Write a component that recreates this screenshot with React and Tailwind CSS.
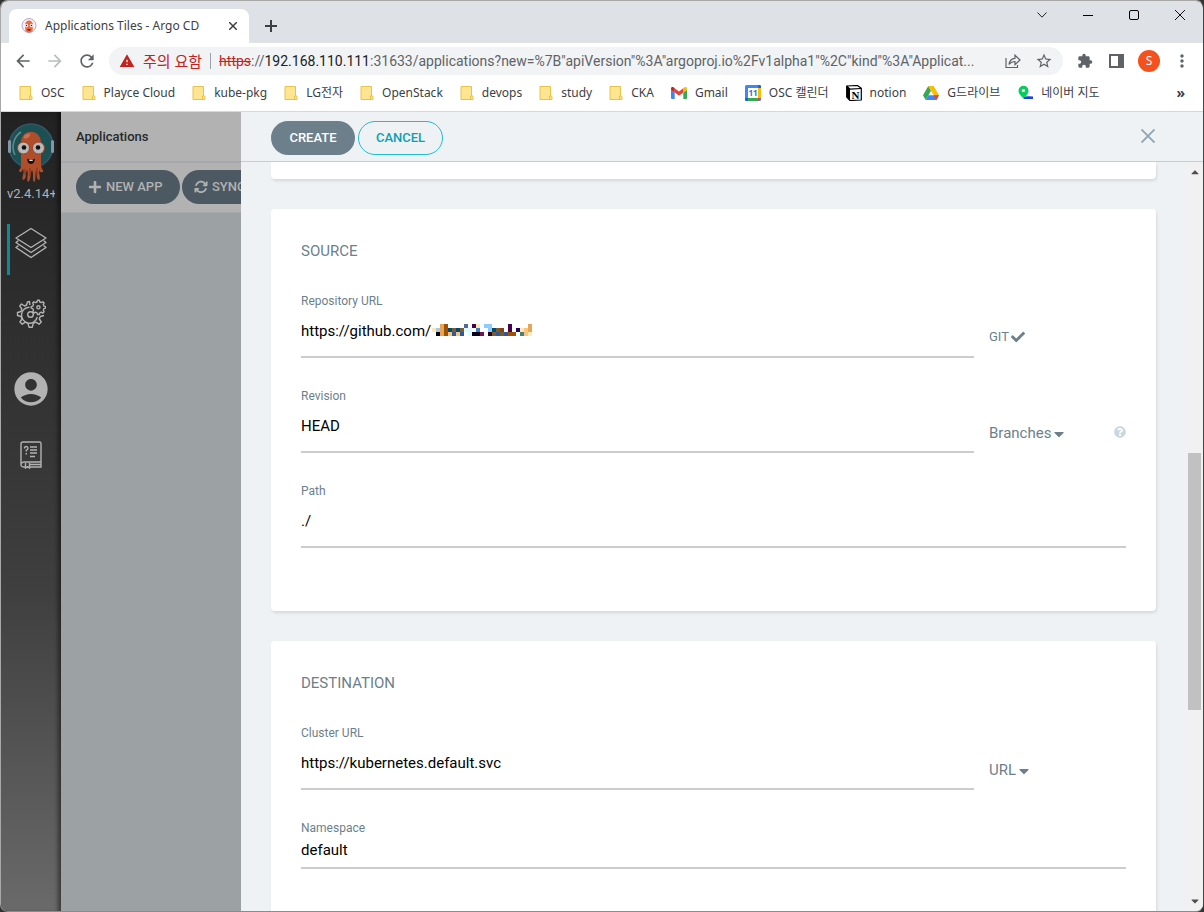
import { useState } from 'react';
import { FaCheck, FaCaretDown, FaCaretUp, FaPlus, FaQuestionCircle } from 'react-icons/fa';
import { FaArrowsRotate } from 'react-icons/fa6';
import {
  MdAccountCircle,
  MdArrowBack,
  MdArrowForward,
  MdExtension,
  MdMoreVert,
  MdRefresh,
  MdStarBorder,
  MdWarning,
} from 'react-icons/md';

const OctopusLogo = ({ className }) => (
  <svg viewBox="0 0 48 60" className={className} aria-hidden="true">
    <circle cx="24" cy="23" r="22" fill="#1d5052" stroke="#33566a" strokeWidth="1.5" />
    <path d="M8 32 A18 18 0 0 1 14 9" fill="none" stroke="#5f8a8c" strokeWidth="1.6" />
    <rect x="1" y="17" width="3" height="13" rx="1.5" fill="#8197a6" />
    <rect x="44" y="17" width="3" height="13" rx="1.5" fill="#8197a6" />
    <path
      d="M14 20 C14 5 34 5 34 20 L34 42 C35 48 37 47 36 49 C33 50 32 48 32 46 C32 53 34 56 32 57 C29 56 30 51 29 47 C28 53 29 59 27 59 C25 57 27 51 25 47 C23 51 24 58 21 59 C19 56 22 51 20 47 C18 51 20 56 16 57 C14 55 18 50 16 46 C15 49 13 50 12 48 C12 46 14 47 14 42 Z"
      fill="#b04e2c"
    />
    <path d="M18 46v6M23 45v8M30 45v7" stroke="#7d3520" strokeWidth="1" />
    <ellipse cx="20" cy="13" rx="3.5" ry="2" fill="#c9714f" transform="rotate(-30 20 13)" />
    <circle cx="16.500" cy="25" r="6" fill="#b9b9b9" stroke="#a03f2a" />
    <circle cx="31.500" cy="25" r="6" fill="#b9b9b9" stroke="#a03f2a" />
    <circle cx="17" cy="24.500" r="2.300" fill="#111" />
    <circle cx="31" cy="24.500" r="2.300" fill="#111" />
    <path d="M20 35.500 Q24 38 28 35.500 Q27.500 41 24 41 Q20.500 41 20 35.500Z" fill="#1b1010" />
    <path d="M22.300 36.700h3.400v1.300h-3.400z" fill="#ddd" />
  </svg>
);

const TabFavicon = () => (
  <svg viewBox="0 0 16 16" className="size-4" aria-hidden="true">
    <circle cx="8" cy="7.500" r="7" fill="#f4f0f6" stroke="#b5a8cf" />
    <path d="M4 7 C4 1 12 1 12 7 L11.500 13 Q8 16 4.500 13Z" fill="#ee6b3f" />
    <circle cx="5.500" cy="7.500" r="1.700" fill="#fff" />
    <circle cx="10.500" cy="7.500" r="1.700" fill="#fff" />
    <circle cx="5.500" cy="7.500" r=".8" fill="#222" />
    <circle cx="10.500" cy="7.500" r=".8" fill="#222" />
    <path d="M6.500 11h3v1.500h-3z" fill="#5a1f12" />
  </svg>
);

const LayersIcon = () => (
  <svg viewBox="0 0 34 32" className="h-8 w-[34px]" fill="none" stroke="#b2b2b2" strokeWidth="1.4" strokeLinejoin="round">
    <path d="M17 1.500 32 11 17 20.500 2 11Z" />
    <path d="M4.500 13.500 2 15.500 17 25.500 32 15.500 29.500 13.500" />
    <path d="M4.500 18.500 2 20.500 17 30.500 32 20.500 29.500 18.500" />
  </svg>
);

const GearsIcon = () => (
  <svg viewBox="0 0 30 30" className="size-[30px]" fill="none" stroke="#b2b2b2" strokeWidth="1.4" strokeLinejoin="round">
    <path d="M13.800 6 13.500 2.500 11.500 3 10.500 6 8.500 7 5.500 5 3.800 7 5.800 10 5 12.500 1.500 13.500 1.500 16.500 5 17.500 6 20 4 23 6.200 25.200 9.500 23.200 12 24.300 13 28.200 16.300 28.200 17.300 24.300 19.800 23.200 23 25.200 25.300 23 23.300 20 24.300 17.500 28 16.500" />
    <path d="M21.300 18 A8 8 0 1 1 13.500 8.200" />
    <circle cx="14.500" cy="15.500" r="2.800" />
    <path d="M21.500 1.200h1.800l.5 1.800 1.500.6 1.600-.8 1.200 1.200-.8 1.600.6 1.500 1.700.5v1.600l-1.700.5-.6 1.500.8 1.600-1.200 1.200-1.600-.8-1.500.6-.5 1.700h-1.800l-.5-1.700-1.500-.6-1.600.8-1.200-1.200.8-1.600-.6-1.500-1.700-.5V7.600l1.700-.5.6-1.500-.8-1.600 1.200-1.200 1.600.8 1.500-.6Z" />
    <circle cx="22.400" cy="8.300" r="1.600" />
  </svg>
);

const BookIcon = () => (
  <svg viewBox="0 0 22 28" className="h-7 w-[22px]" fill="none" stroke="#b2b2b2" strokeWidth="1.4">
    <path d="M5 26 H3.500 Q1 26 1 23.500 V3 Q1 1 3 1 H19.500 Q21 1 21 2.500 V26 H10" />
    <path d="M1.500 22.500 Q2 21 4 21 H21 M10 23.500 H21" />
    <path d="M5.500 22v5l2-1.300 2 1.300v-5" />
    <path d="M4.500 7.500 Q4.500 5.500 6.300 5.500 Q8 5.500 8 7.300 Q8 8.500 6.300 9.300 V10.500 M6.300 12v1.500" />
    <path d="M10 6h7M10 9h7M10 12h7M10 15.500h5" />
  </svg>
);

const FolderIcon = () => (
  <svg viewBox="0 0 14 16" className="h-4 w-3.5">
    <path d="M1 1.500h10.500v9l1.500 1v3H1Z" fill="#ffe591" stroke="#e8c34a" />
    <path d="M10.500 14.500v-3.500h2" fill="none" stroke="#e8c34a" />
  </svg>
);

const GmailIcon = () => (
  <svg viewBox="0 0 16 12" className="h-3 w-4">
    <path d="M1 12h2.700V5.500L0 2.700V11q0 1 1 1Z" fill="#4285f4" />
    <path d="M12.300 12H15q1 0 1-1V2.700l-3.700 2.800Z" fill="#34a853" />
    <path d="M12.300 1.300v4.200L16 2.700V1.500C16 0 14.500-.5 13.500.3Z" fill="#fbbc04" />
    <path d="M3.700 5.500V1.300L8 4.500l4.300-3.200v4.200L8 8.700Z" fill="#ea4335" />
    <path d="M0 1.500v1.200l3.700 2.800V1.300L2.500.3C1.500-.5 0 0 0 1.500Z" fill="#c5221f" />
  </svg>
);

const CalendarIcon = () => (
  <svg viewBox="0 0 16 16" className="size-4">
    <rect width="16" height="16" rx="1.500" fill="#4285f4" />
    <path d="M13 3H16v10h-3Z" fill="#fbbc04" />
    <path d="M3 13h10V16H3Z" fill="#34a853" />
    <path d="M13 13H16L13 16Z" fill="#ea4335" />
    <path d="M0 13h3V16H1.500Q0 16 0 14.500ZM13 0h1.500Q16 0 16 1.500V3h-3Z" fill="#1967d2" />
    <path d="M3 3h10v10H3Z" fill="#fff" />
    <text x="8" y="11" textAnchor="middle" fontSize="8" fontWeight="700" fill="#1a73e8">11</text>
  </svg>
);

const NotionIcon = () => (
  <svg viewBox="0 0 16 16" className="size-4">
    <path d="M.7 1 11.500.5 15.300 3.300V15L4 15.500.7 12Z" fill="#fff" stroke="#000" strokeWidth="1.2" strokeLinejoin="round" />
    <path d="M.7 1 4 4.200V15.500L.7 12Z" fill="#000" />
    <path d="M.7 1 4 4.200 15.300 3.500" fill="none" stroke="#000" strokeWidth="1.2" />
    <text x="9.500" y="13.500" textAnchor="middle" fontSize="11" fontWeight="700" fontFamily="Liberation Serif, serif" fill="#000">N</text>
  </svg>
);

const DriveIcon = () => (
  <svg viewBox="0 0 16 14" className="h-3.5 w-4">
    <path d="M5.300 0 L0 9.300 2.700 14 8 4.700Z" fill="#34a853" />
    <path d="M5.300 0 H10.700 L16 9.300 H10.700Z" fill="#fbbc04" />
    <path d="M5.300 9.300 H16 L13.300 14 H2.700Z" fill="#4285f4" />
    <path d="M10.700 9.300H16L13.300 14Z" fill="#ea4335" />
  </svg>
);

const MapIcon = () => (
  <svg viewBox="0 0 16 16" className="size-4">
    <path d="M6.500 12 Q8 11 16 11.500V14H7Z" fill="#1b3fe0" />
    <path d="M6.500 14C4.500 11 1.500 9 1.500 5.800a5 5 0 0 1 10 0C11.500 9 8.500 11 6.500 14Z" fill="#03d058" />
    <circle cx="6.500" cy="5.500" r="1.600" fill="#fff" />
  </svg>
);

const bookmarks = [
  { name: 'OSC', icon: FolderIcon },
  { name: 'Playce Cloud', icon: FolderIcon },
  { name: 'kube-pkg', icon: FolderIcon },
  { name: 'LG전자', icon: FolderIcon },
  { name: 'OpenStack', icon: FolderIcon },
  { name: 'devops', icon: FolderIcon },
  { name: 'study', icon: FolderIcon },
  { name: 'CKA', icon: FolderIcon },
  { name: 'Gmail', icon: GmailIcon },
  { name: 'OSC 캘린더', icon: CalendarIcon },
  { name: 'notion', icon: NotionIcon },
  { name: 'G드라이브', icon: DriveIcon },
  { name: '네이버 지도', icon: MapIcon },
];

const TabStrip = () => (
  <div className="flex h-[42px] shrink-0 items-end justify-between bg-[#dee1e6] pl-2">
    <div className="flex items-end">
      <div className="flex h-[34px] w-60 items-center rounded-t-lg bg-white pr-2 pl-3">
        <TabFavicon />
        <span className="ml-2 flex-1 whitespace-nowrap text-[#3c4043]">Applications Tiles - Argo CD</span>
        <button aria-label="Close tab" className="flex size-4 items-center justify-center">
          <svg viewBox="0 0 8 8" className="size-2" stroke="#3c4043" strokeWidth="1.5">
            <path d="M0 0l8 8M8 0L0 8" />
          </svg>
        </button>
      </div>
      <button aria-label="New tab" className="ml-2 flex h-[34px] w-7 items-center justify-center">
        <svg viewBox="0 0 12 12" className="size-3" stroke="#3c4043" strokeWidth="2">
          <path d="M6 0v12M0 6h12" />
        </svg>
      </button>
    </div>
    <div className="flex h-7 self-start">
      <button aria-label="Search tabs" className="flex w-[46px] items-center justify-center">
        <svg viewBox="0 0 10 6" className="h-1.5 w-2.5" fill="none" stroke="#222">
          <path d="M.5.5 5 5.200 9.500.5" />
        </svg>
      </button>
      <button aria-label="Minimize" className="flex w-[46px] items-center justify-center">
        <span className="h-px w-2.5 bg-black" />
      </button>
      <button aria-label="Maximize" className="flex w-[46px] items-center justify-center">
        <span className="size-2.5 rounded-xs border border-black" />
      </button>
      <button aria-label="Close" className="flex w-[46px] items-center justify-center">
        <svg viewBox="0 0 10 10" className="size-2.5" stroke="#111">
          <path d="M0 0l10 10M10 0L0 10" />
        </svg>
      </button>
    </div>
  </div>
);

const Toolbar = () => (
  <div className="flex h-9 shrink-0 items-center bg-white pr-[11px] pl-3 text-[#5f6368]">
    <button aria-label="Back" className="mr-3"><MdArrowBack className="size-5" /></button>
    <button aria-label="Forward" className="mr-3 text-[#babcbe]"><MdArrowForward className="size-5" /></button>
    <button aria-label="Reload" className="mr-3"><MdRefresh className="size-5" /></button>
    <div className="flex h-7 min-w-0 flex-1 items-center rounded-full bg-[#f1f3f4] px-2.5 text-[14px]">
      <MdWarning className="mr-2 size-4 shrink-0 text-[#c5221f]" />
      <span className="shrink-0 text-[15px] leading-5 text-[#c5221f]">주의 요함</span>
      <span className="mx-2 h-4 w-px shrink-0 bg-[#9aa0a6]" />
      <span className="min-w-0 flex-1 font-[Roboto,sans-serif] whitespace-nowrap">
        <span className="text-[#c5221f] line-through">https</span>://<span className="text-[#202124]">192.168.110.111</span>
        :31633/applications?new=%7B"apiVersion"%3A"argoproj.io%2Fv1alpha1"%2C"kind"%3A"Applicat...
      </span>
      <button aria-label="Share" className="ml-2">
        <svg viewBox="0 0 16 16" className="size-4" fill="none" stroke="#5f6368" strokeWidth="1.2">
          <path d="M1 5v9.500h11.500V12" />
          <path d="M4 11.500C4.500 8 6.500 5.500 10 5.300V2.200l5 4.800-5 4.600V8.500C7.500 8.500 5.500 9.500 4 11.500Z" />
        </svg>
      </button>
      <button aria-label="Bookmark" className="ml-3.5"><MdStarBorder className="size-[18px]" /></button>
    </div>
    <button aria-label="Extensions" className="ml-3.5"><MdExtension className="size-4" /></button>
    <button aria-label="Side panel" className="ml-4 h-3.5 w-[15px] border-2 border-r-[6px] border-[#5f6368]" />
    <button className="ml-3.5 size-[22px] rounded-full bg-[#f4511e] text-[12px] text-white">S</button>
    <button aria-label="Menu" className="ml-3"><MdMoreVert className="size-5" /></button>
  </div>
);

const BookmarkBar = () => (
  <div className="flex h-[33px] shrink-0 items-center border-b border-[#d5d7da] bg-white px-[18px] pb-1 text-[#3c4043]">
    <nav className="flex flex-1 items-center gap-[17px]">
      {bookmarks.map(({ name, icon: Icon }) => (
        <a key={name} href="#" className="flex items-center gap-2 whitespace-nowrap">
          <Icon />
          {name}
        </a>
      ))}
    </nav>
    <button aria-label="More bookmarks" className="text-[14px] leading-4 font-bold">»</button>
  </div>
);

const Sidebar = () => (
  <aside className="flex w-[60px] shrink-0 flex-col items-center bg-linear-to-b from-[#222] via-[#3f3f3f] via-60% to-[#6a6a6a] shadow-[inset_-5px_0_4px_-2px_rgba(0,0,0,0.45)]">
    <OctopusLogo className="mt-2.5 h-[62px] w-12" />
    <div className="mt-0.5 w-12 overflow-hidden font-[Roboto,sans-serif] text-[13px] leading-4 whitespace-nowrap text-[#b2b2b2]">
      v2.4.14+
    </div>
    <a href="#" aria-label="Applications" className="mt-[22px] flex h-[51px] w-full items-center pl-1.5">
      <span className="mr-1 h-full w-[3px] bg-[#0f8a94]" />
      <span className="mb-3.5"><LayersIcon /></span>
    </a>
    <a href="#" aria-label="Settings" className="mt-6"><GearsIcon /></a>
    <a href="#" aria-label="User info" className="mt-10 text-[#b2b2b2]"><MdAccountCircle className="size-10" /></a>
    <a href="#" aria-label="Documentation" className="mt-8"><BookIcon /></a>
  </aside>
);

const AppsPage = () => (
  <main className="w-[180px] shrink-0 overflow-hidden bg-[#9ca1a4] font-[Roboto,sans-serif]">
    <h1 className="flex h-[51px] items-center border-b-2 border-[#a6a9ab] bg-[#b2b2b2] pl-[15px] text-[13px] font-medium text-[#25292c]">
      Applications
    </h1>
    <div className="flex h-[50px] items-center gap-0.5 border-b border-[#a6a9ab] bg-[#b2b2b2] pb-0.5 pl-[15px] text-[13px] font-medium whitespace-nowrap text-[#b2b2b2]">
      <button className="flex h-[34px] w-[104px] shrink-0 items-center gap-1 rounded-full bg-[#4c5962] px-3">
        <FaPlus className="size-3.5" /> NEW APP
      </button>
      <button className="flex h-[34px] shrink-0 items-center gap-1 rounded-full bg-[#4c5962] px-3">
        <FaArrowsRotate className="size-3.5" /> SYNC APPS
      </button>
    </div>
  </main>
);

// colours of the censored part of the repository name, one string per row
const mosaicRows = [
  'w w o b w w w w s w p y w l l w w w w p w w w w o',
  'y c o b t u t u i i w m w w l t u r w p w n y g o',
  'w k o b g d g d w i k k q w x u d u d b b w z g y',
];

const mosaicColors = {
  w: '#ffffff', o: '#e8a553', b: '#a05200', s: '#4f6b98', p: '#4a004c', y: '#ffe9b0',
  l: '#8fcbff', c: '#a9c8e8', t: '#004a6e', u: '#7a5c32', i: '#e0fbff', m: '#3a82c8',
  r: '#8a4010', n: '#200060', g: '#f6c583', k: '#050018', d: '#2a5a9a', q: '#7a1050',
  x: '#2a0014', z: '#46807c',
};

const Mosaic = () => (
  <svg viewBox="0 0 100 12" className="absolute top-[3px] left-[131px] h-3 w-[100px]" shapeRendering="crispEdges" aria-hidden="true">
    {mosaicRows.map((row, y) =>
      row.split(' ').map((key, x) => (
        <rect key={`${x}-${y}`} x={x * 4} y={y * 4} width="4" height="4" fill={mosaicColors[key]} />
      ))
    )}
  </svg>
);

const Field = ({ id, label, value, compact, censored, children }) => {
  const [text, setText] = useState(value);

  return (
    <div className="flex gap-[15px]">
      <div className={`flex min-w-0 flex-1 flex-col border-b-2 border-[#ccc] ${compact ? 'gap-0.5 pb-[7px]' : 'gap-2.5 pb-[15px]'}`}>
        <label htmlFor={id} className="text-[12px] leading-5 text-[#6d7f8b]">{label}</label>
        <div className="relative flex">
          <input
            id={id}
            value={text}
            onChange={(e) => setText(e.target.value)}
            className="h-5 w-full text-[15px] leading-5 text-black outline-none"
          />
          {censored && <Mosaic />}
        </div>
      </div>
      {children && <div className="flex w-[137px] items-center pt-6 text-[#6d7f8b]">{children}</div>}
    </div>
  );
};

const TypeSelect = ({ label, options }) => (
  <label className="mt-1 flex items-center text-[15px]">
    <select aria-label={label} className="field-sizing-content appearance-none outline-none">
      {options.map((option) => (
        <option key={option}>{option}</option>
      ))}
    </select>
    <FaCaretDown className="size-4" />
  </label>
);

const Card = ({ title, children, className }) => (
  <section className={`shrink-0 rounded bg-white px-[30px] pt-8 shadow-[1px_2px_3px_rgba(0,0,0,0.1)] ${className}`}>
    <h2 className="mb-[30px] text-[15px] leading-5 text-[#6d7f8b]">{title}</h2>
    <div className="flex flex-col gap-7">{children}</div>
  </section>
);

const CreatePanel = () => (
  <div className="flex min-w-0 flex-1 flex-col bg-[#eef2f5] font-[Roboto,sans-serif]">
    <header className="flex h-[50px] shrink-0 items-center border-b border-[#c6cdd2] pr-12 pb-px pl-[30px] text-[13px] font-medium">
      <button className="mt-1 h-[34px] w-[84px] rounded-full bg-[#6d7f8b] text-white">CREATE</button>
      <button className="mt-1 ml-[3px] h-[34px] w-[85px] rounded-full border border-[#1fbdd0] text-[#0f9fb0]">CANCEL</button>
      <button aria-label="Close panel" className="ml-auto">
        <svg viewBox="0 0 14 14" className="size-3.5" stroke="#8fa4b1" strokeWidth="1.8">
          <path d="M.5.5l13 13M13.500.5l-13 13" />
        </svg>
      </button>
    </header>
    <div className="flex min-h-0 flex-1">
      <form className="flex min-w-0 flex-1 flex-col gap-[30px] overflow-hidden px-[30px]">
        <div className="h-[17px] shrink-0 rounded-b bg-white shadow-[1px_2px_3px_rgba(0,0,0,0.1)]" />
        <Card title="SOURCE" className="pb-[63px]">
          <Field id="repo" label="Repository URL" value="https://github.com/" censored>
            <span className="flex items-center gap-0.5 text-[13px]">
              GIT <FaCheck className="size-3.5" />
            </span>
          </Field>
          <Field id="revision" label="Revision" value="HEAD">
            <TypeSelect label="Revision type" options={['Branches', 'Tags']} />
            <FaQuestionCircle className="ml-auto size-3 text-[#ccd6dd]" />
          </Field>
          <Field id="path" label="Path" value="./" />
        </Card>
        <Card title="DESTINATION" className="pb-[63px]">
          <Field id="cluster" label="Cluster URL" value="https://kubernetes.default.svc">
            <TypeSelect label="Cluster type" options={['URL', 'NAME']} />
          </Field>
          <Field id="namespace" label="Namespace" value="default" compact />
        </Card>
      </form>
      <div className="flex w-[17px] shrink-0 flex-col items-center bg-[#f1f1f1] text-[#505050]">
        <FaCaretUp className="mt-1 size-3" />
        <div className="mt-[275px] h-[257px] w-[13px] bg-[#c1c1c1]" />
        <FaCaretDown className="mt-auto mb-1 size-3" />
      </div>
    </div>
  </div>
);

export default function App() {
  return (
    <div className="h-screen bg-[#333]">
      <div className="flex h-full flex-col overflow-hidden rounded-lg border border-t-[#a8a8a8] border-r-[#444] border-b-[#8c8c8c] border-l-[#a8a8a8] font-['Noto_Sans','Noto_Sans_CJK_KR',sans-serif] text-[12px]">
        <TabStrip />
        <Toolbar />
        <BookmarkBar />
        <div className="flex min-h-0 flex-1">
          <Sidebar />
          <AppsPage />
          <CreatePanel />
        </div>
      </div>
    </div>
  );
}
